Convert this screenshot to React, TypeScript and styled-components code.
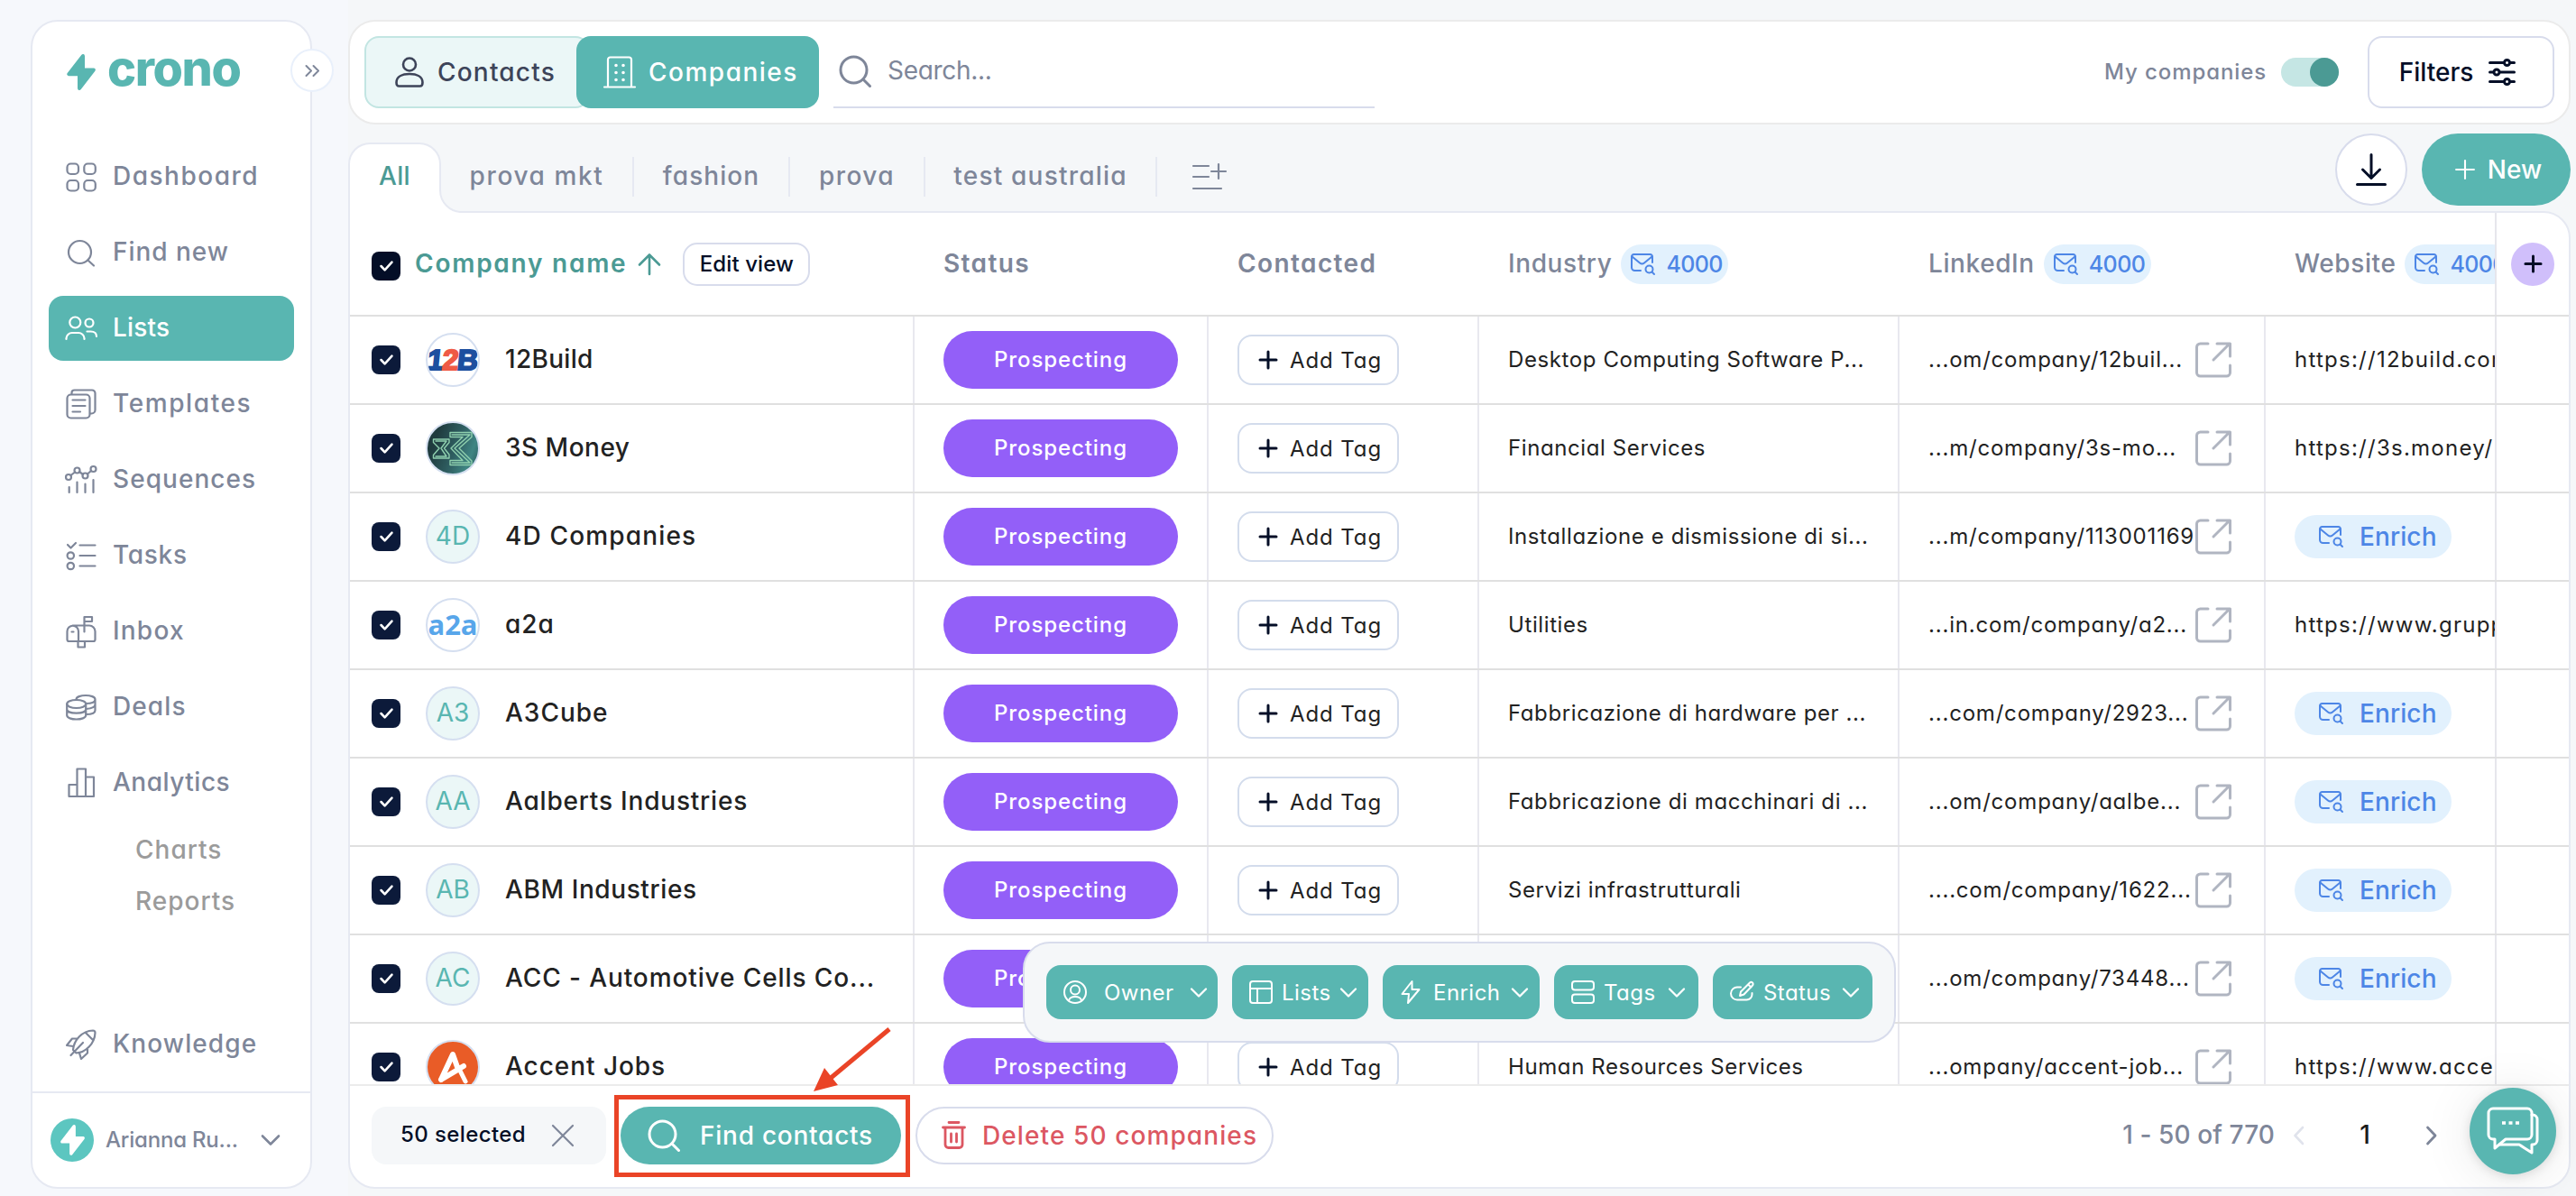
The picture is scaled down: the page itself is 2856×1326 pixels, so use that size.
import React from 'react'
import styled, { createGlobalStyle, css } from 'styled-components'

const teal = '#59b6b1'
const tealDark = '#4b9a94'
const grey = '#7e8699'
const navy = '#040e27'
const line = '#e6e9f2'
const outline = '#d8dcec'
const blue = '#4d86e6'

const GlobalStyle = createGlobalStyle`
*{
    box-sizing:border-box;
}
body{
    margin:0;
    background:#f6f8fc;
    font-family:Inter, "Liberation Sans", sans-serif;
    font-feature-settings:"cv11";
    line-height:1.2;
}
`

const Page = styled.div`
    position:relative;
    display:flex;
    width:2856px;
    height:1326px;
    overflow:hidden;
    white-space:nowrap;
    color:#222;
`

const Svg = styled.svg<{ $s?: number }>`
    display:block;
    flex:none;
    overflow:visible;
    fill:none;
    stroke:currentColor;
    stroke-width:${({ $s }) => $s || 2};
    stroke-linecap:round;
    stroke-linejoin:round;
`

/* ---------- sidebar ---------- */

const Sidebar = styled.aside`
    position:relative;
    display:flex;
    flex-direction:column;
    flex:none;
    width:312px;
    margin:22px 40px 8px 34px;
    border:2px solid ${line};
    border-radius:30px;
    background:#fff;
`

const Logo = styled.div`
    display:flex;
    align-items:center;
    gap:13px;
    height:76px;
    margin:18px 0 0 38px;
    color:${teal};
`

const LogoText = styled.span`
    font-size:54px;
    font-weight:800;
    line-height:60px;
    letter-spacing:-1.4px;
    margin-top:-8px;
`

const Collapse = styled.button`
    position:absolute;
    top:30px;
    right:-26px;
    display:flex;
    align-items:center;
    justify-content:center;
    width:48px;
    height:48px;
    padding:0;
    border:2px solid #e9f0fb;
    border-radius:50%;
    background:#fff;
    color:${grey};
`

const Nav = styled.nav`
    display:flex;
    flex-direction:column;
    gap:12px;
    margin:42px 18px 0;
`

const NavItem = styled.a<{ $active?: boolean; $track: number }>`
    display:flex;
    align-items:center;
    gap:17px;
    height:72px;
    padding-left:18px;
    border-radius:16px;
    font-size:28px;
    font-weight:500;
    letter-spacing:${({ $track }) => $track}px;
    color:${({ $active }) => ($active ? '#fff' : grey)};
    background:${({ $active }) => ($active ? teal : 'transparent')};
`

const SubNav = styled.div`
    display:flex;
    flex-direction:column;
    gap:23px;
    margin:22px 0 0 114px;
    font-size:28px;
    font-weight:500;
    letter-spacing:1px;
    color:#9b9b9b;
`

const Bottom = styled.div`
    margin:auto 18px 16px;
`

const Profile = styled.div`
    display:flex;
    align-items:center;
    height:106px;
    padding:0 34px 0 20px;
    border-top:2px solid ${line};
    font-size:24px;
    font-weight:500;
    letter-spacing:-.2px;
    color:${grey};
`

const ProfileBadge = styled.span`
    display:flex;
    align-items:center;
    justify-content:center;
    width:48px;
    height:48px;
    margin-right:13px;
    border-radius:50%;
    background:#5cc6c0;
    color:#fff;
`

/* ---------- main area ---------- */

const Main = styled.main`
    display:flex;
    flex-direction:column;
    flex:1;
    min-width:0;
    padding:22px 6px 8px 0;
    background:#f5f7f9;
`

const TopBar = styled.header`
    display:flex;
    align-items:center;
    flex:none;
    height:116px;
    padding:0 16px;
    border:2px solid #ebebeb;
    border-radius:30px;
    background:#fff;
`

const Segment = styled.button<{ $active?: boolean }>`
    display:flex;
    align-items:center;
    height:80px;
    border-radius:16px;
    font-family:inherit;
    font-feature-settings:inherit;
    font-size:28px;
    font-weight:500;
    ${({ $active }) =>
        $active
            ? css`
                  width:269px;
                  margin-left:-15px;
                  padding:0 0 0 30px;
                  gap:14px;
                  border:0;
                  letter-spacing:1.5px;
                  background:${teal};
                  color:#fff;
              `
            : css`
                  width:250px;
                  padding:0 0 0 32px;
                  gap:15px;
                  border:2px solid #c2e5e2;
                  letter-spacing:1.2px;
                  background:#ebf7f7;
                  color:#3d4459;
              `}
`

const Search = styled.div`
    display:flex;
    align-items:center;
    gap:18px;
    width:600px;
    height:80px;
    margin-left:16px;
    padding:0 0 0 6px;
    border-bottom:2px solid ${outline};
    font-size:28px;
    letter-spacing:-.3px;
    color:${grey};
`

const ToggleLabel = styled.span`
    margin-left:auto;
    font-size:24px;
    font-weight:500;
    letter-spacing:.9px;
    color:${grey};
`

const Toggle = styled.span`
    display:flex;
    justify-content:flex-end;
    width:64px;
    height:32px;
    margin:0 32px 0 16px;
    border-radius:16px;
    background:#c5e6e4;

    &::after{
        content:'';
        width:32px;
        border-radius:50%;
        background:${tealDark};
    }
`

const FiltersButton = styled.button`
    display:flex;
    align-items:center;
    justify-content:center;
    gap:17px;
    width:207px;
    height:80px;
    padding:0 8px 0 0;
    border:2px solid ${outline};
    border-radius:16px;
    background:#fff;
    font:500 28px Inter, sans-serif;
    color:${navy};
`

const TabsRow = styled.div`
    display:flex;
    flex:none;
    height:96px;
`

const ActiveTab = styled.div`
    position:relative;
    z-index:1;
    width:103px;
    height:78px;
    margin-top:20px;
    padding-top:19px;
    border:2px solid ${line};
    border-bottom:0;
    border-radius:24px 24px 0 0;
    background:#fff;
    text-align:center;
    font-size:28px;
    font-weight:500;
    letter-spacing:.4px;
    color:${tealDark};
`

const TabCurve = styled(Svg)`
    position:absolute;
    left:100%;
    bottom:0;
`

const Tab = styled.div<{ $w: number; $track: number }>`
    display:flex;
    align-items:center;
    justify-content:center;
    width:${({ $w }) => $w}px;
    height:44px;
    margin-top:36px;
    border-right:2px solid ${line};
    font-size:28px;
    font-weight:500;
    letter-spacing:${({ $track }) => $track}px;
    color:${grey};
`

const Actions = styled.div`
    display:flex;
    gap:16px;
    margin:10px 0 0 auto;
`

const RoundButton = styled.button`
    display:flex;
    align-items:center;
    justify-content:center;
    width:80px;
    height:80px;
    padding:0;
    border:2px solid ${outline};
    border-radius:50%;
    background:#fff;
    color:${navy};
`

const NewButton = styled.button`
    display:flex;
    align-items:center;
    justify-content:center;
    gap:14px;
    width:165px;
    height:80px;
    padding:0 0 0 5px;
    border:0;
    border-radius:40px;
    background:${teal};
    font:500 28px Inter, sans-serif;
    color:#fff;
`

/* ---------- table ---------- */

const Table = styled.section`
    display:flex;
    flex-direction:column;
    flex:1;
    min-height:0;
    border:2px solid ${line};
    border-radius:0 30px 30px 30px;
    background:#fff;
    overflow:hidden;
`

const Row = styled.div<{ $head?: boolean }>`
    display:grid;
    grid-template-columns:626px 326px 300px 466px 406px 254px 82px;
    flex:none;
    height:${({ $head }) => ($head ? 115 : 98)}px;
    border-bottom:2px solid #e0e0e0;
`

const Cell = styled.div`
    display:flex;
    align-items:center;
    min-width:0;
    padding-left:32px;
    border-right:2px solid #e8e8ef;
    overflow:hidden;
    font-size:24px;
    letter-spacing:.6px;

    &:first-child{
        padding-left:24px;
    }
    &:nth-child(6){
        border-right:0;
    }
    &:last-child{
        padding-left:0;
        border-right:0;
        border-left:2px solid #e6e6ec;
        justify-content:center;
    }
`

const HeadCell = styled(Cell)<{ $bold?: boolean }>`
    border-right-color:transparent;
    font-size:28px;
    font-weight:${({ $bold }) => ($bold ? 600 : 500)};
    letter-spacing:${({ $bold }) => ($bold ? 1.4 : 0.6)}px;
    color:${grey};
`

const SortLabel = styled.span`
    margin:0 13px 0 16px;
    letter-spacing:1.75px;
    color:${tealDark};
`

const EditView = styled.button`
    width:141px;
    height:48px;
    margin-left:25px;
    padding:0;
    border:2px solid ${outline};
    border-radius:16px;
    background:#fff;
    font:500 24px Inter, sans-serif;
    letter-spacing:.1px;
    color:${navy};
`

const Credit = styled.span`
    display:flex;
    align-items:center;
    flex:none;
    gap:12px;
    width:119px;
    height:44px;
    margin-left:10px;
    padding-left:11px;
    border-radius:22px;
    background:#e2f1fd;
    font-size:25px;
    font-weight:500;
    letter-spacing:-.6px;
    color:${blue};
`

const AddColumn = styled.button`
    display:flex;
    align-items:center;
    justify-content:center;
    width:48px;
    height:48px;
    padding:0;
    border:0;
    border-radius:50%;
    background:#d0bffb;
    color:${navy};
`

const CheckBox = styled.span<{ $head?: boolean }>`
    display:flex;
    align-items:center;
    justify-content:center;
    flex:none;
    width:32px;
    height:32px;
    margin-top:${({ $head }) => ($head ? 5 : 0)}px;
    border-radius:8px;
    background:${({ $head }) => ($head ? navy : '#0c1a3a')};
    color:#fff;
`

const Avatar = styled.span<{ $bg: string }>`
    display:flex;
    align-items:center;
    justify-content:center;
    flex:none;
    width:60px;
    height:60px;
    margin:0 28px;
    border:2px solid #d5dff0;
    border-radius:50%;
    background:${({ $bg }) => $bg};
    overflow:hidden;
    font-size:28px;
    letter-spacing:0;
    color:${teal};
`

const BuildLogo = styled.span`
    font:900 32px "Liberation Sans", sans-serif;
    letter-spacing:-1.2px;
    color:#1d4f9f;
    transform:skewX(-6deg);
    -webkit-text-stroke:2px #1d4f9f;

    b{
        color:#ef5a45;
        -webkit-text-stroke:2px #ef5a45;
    }
`

const A2aLogo = styled.span`
    margin-top:-3px;
    font:700 31px "Open Sans", sans-serif;
    color:#58a6ea;
`

const Name = styled.span<{ $track: number }>`
    font-size:28px;
    font-weight:500;
    letter-spacing:${({ $track }) => $track}px;
`

const StatusPill = styled.span`
    display:flex;
    align-items:center;
    justify-content:center;
    width:260px;
    height:64px;
    border-radius:32px;
    background:#935ff8;
    font-weight:500;
    letter-spacing:.9px;
    color:#fff;
`

const AddTag = styled.button`
    display:flex;
    align-items:center;
    gap:14px;
    width:179px;
    height:56px;
    padding:0 0 0 22px;
    border:2px solid #d3dcec;
    border-radius:16px;
    background:#fff;
    font:400 24px Inter, sans-serif;
    font-feature-settings:inherit;
    letter-spacing:.9px;
    color:#222;

    svg{
        color:${navy};
    }
`

const Url = styled.span`
    width:296px;
    flex:none;
    letter-spacing:.8px;
`

const Site = styled.span`
    letter-spacing:1.25px;
`

const Enrich = styled.button`
    display:flex;
    align-items:center;
    gap:18px;
    width:174px;
    height:48px;
    padding:0 0 0 27px;
    border:0;
    border-radius:24px;
    background:#e2f1fd;
    font:500 28px Inter, sans-serif;
    letter-spacing:.1px;
    color:${blue};
`

const Rows = styled.div`
    flex:1;
    min-height:0;
    overflow:hidden;
`

const Footer = styled.footer`
    display:flex;
    align-items:center;
    flex:none;
    height:114px;
    padding:0 146px 3px 24px;
    border-top:2px solid #ebebeb;
    font-size:28px;
    font-weight:500;
    letter-spacing:.1px;
    color:${grey};
`

const Selected = styled.span`
    display:flex;
    align-items:center;
    justify-content:space-between;
    width:260px;
    height:64px;
    padding:0 36px 0 32px;
    border-radius:16px;
    background:#f5f7f9;
    font-size:24px;
    letter-spacing:.4px;
    color:${navy};

    svg{
        color:${grey};
    }
`

const FooterButton = styled.button<{ $danger?: boolean }>`
    display:flex;
    align-items:center;
    height:64px;
    margin-left:16px;
    border-radius:32px;
    font-family:inherit;
    font-feature-settings:inherit;
    font-size:28px;
    font-weight:500;
    ${({ $danger }) =>
        $danger
            ? css`
                  width:397px;
                  padding:0 0 0 27px;
                  gap:18px;
                  border:2px solid ${outline};
                  background:#fff;
                  letter-spacing:1.1px;
                  color:#dc5762;
              `
            : css`
                  width:311px;
                  padding:0 0 0 30px;
                  gap:22px;
                  border:0;
                  background:${teal};
                  letter-spacing:.75px;
                  color:#fff;
              `}
`

const Pager = styled.div`
    display:flex;
    align-items:center;
    margin-left:auto;

    b{
        width:136px;
        text-align:center;
        font-weight:500;
        color:#1c1c1c;
    }
`

/* ---------- overlays ---------- */

const BulkBar = styled.div`
    position:absolute;
    left:1134px;
    top:1044px;
    display:flex;
    gap:16px;
    width:968px;
    height:112px;
    padding:24px;
    border:2px solid ${outline};
    border-radius:30px;
    background:#f5f7f9;
`

const BulkButton = styled.button<{ $w: number; $gap?: number }>`
    display:flex;
    align-items:center;
    gap:${({ $gap }) => $gap || 10}px;
    width:${({ $w }) => $w}px;
    height:60px;
    padding:0 15px 0 19px;
    border:0;
    border-radius:16px;
    background:${teal};
    font:400 24px Inter, sans-serif;
    font-feature-settings:inherit;
    letter-spacing:.45px;
    color:#fff;

    svg:last-child{
        margin-left:auto;
    }
`

const ChatButton = styled.button`
    position:absolute;
    left:2738px;
    top:1206px;
    display:flex;
    align-items:center;
    justify-content:center;
    width:96px;
    height:96px;
    padding:0;
    border:0;
    border-radius:50%;
    background:${teal};
    box-shadow:0 2px 12px rgba(0,0,0,.12), 0 4px 60px rgba(0,0,0,.09);
    color:#fff;
`

const Callout = styled(Svg)`
    position:absolute;
    left:676px;
    top:1130px;
    color:#ea4427;
`

/* ---------- icons ---------- */

const Bolt = ({ w, h }: { w: number; h: number }) => (
    <Svg width={w} height={h} viewBox="0 0 32 40" $s={2}>
        <path fill="currentColor" d="M17 1.5 1.5 21.5c-.6.9-.2 1.7.8 1.7H13v14.5c0 1.4 1.2 1.7 2 .6l15.6-20.2c.6-.9.2-1.7-.8-1.7H19V2.2c0-1.4-1.2-1.7-2-.7z" />
    </Svg>
)

const SearchIcon = ({ size = 36, s = 2.6 }: { size?: number; s?: number }) => (
    <Svg width={size} height={size} viewBox="0 0 36 36" $s={s}>
        <circle cx="16.5" cy="16.5" r="14.5" />
        <path d="M27 27l7.5 7.5" />
    </Svg>
)

const Plus = ({ size = 20, s = 3 }: { size?: number; s?: number }) => (
    <Svg width={size} height={size} viewBox="0 0 20 20" $s={s}>
        <path d="M10 1v18M1 10h18" />
    </Svg>
)

const Check = () => (
    <Svg width="17" height="12" viewBox="0 0 18 14" $s={3}>
        <path d="M2 7l4.8 5L16 2" />
    </Svg>
)

const Chevron = ({ w = 18 }: { w?: number }) => (
    <Svg width={w} height={w / 2} viewBox="0 0 18 9" $s={2.3}>
        <path d="M1 .5l8 8 8-8" />
    </Svg>
)

const MailSearch = () => (
    <Svg width="27" height="24" viewBox="0 0 27 24">
        <path d="M11 19H4.5A3.5 3.5 0 0 1 1 15.5V3.5A2.5 2.5 0 0 1 3.5 1h18A2.5 2.5 0 0 1 24 3.5V10" />
        <path d="M1.5 3.5L10 10.5a4 4 0 0 0 5 0L23.5 3.5" />
        <circle cx="20.5" cy="17.5" r="4" />
        <path d="M23.5 20.5L26 23" />
    </Svg>
)

const External = () => (
    <Svg width="40" height="40" viewBox="0 0 40 40" $s={3} color="#b0b5c1">
        <path d="M14 2H5.5A4 4 0 0 0 1.5 6v28a4 4 0 0 0 4 4h29a4 4 0 0 0 4-4v-8M24 2h14.500v14M38 2L20 20" />
    </Svg>
)

const navIcons: Record<string, React.ReactNode> = {
    Dashboard: (
        <>
            <rect x="2.5" y="3.5" width="12.5" height="11.5" rx="4" />
            <rect x="21.3" y="3.5" width="12.5" height="11.5" rx="4" />
            <rect x="2.5" y="22" width="12.5" height="11.5" rx="4" />
            <rect x="21.3" y="22" width="12.5" height="11.5" rx="4" />
        </>
    ),
    'Find new': (
        <>
            <circle cx="16.5" cy="17.5" r="12.5" />
            <path d="M25.500 26.500l6.500 6" />
        </>
    ),
    Lists: (
        <>
            <circle cx="11.3" cy="11.5" r="6" />
            <circle cx="27" cy="12" r="4.5" />
            <path d="M1.5 30v-1a6.5 6.5 0 0 1 6.5-6h7a6.5 6.5 0 0 1 6.5 6v1M24.5 21.5h4c4 0 6.5 1.5 6.5 5.5" />
        </>
    ),
    Templates: (
        <>
            <rect x="2.5" y="7.5" width="25" height="26" rx="4" />
            <path d="M7.5 7V5.5a3 3 0 0 1 3-3H30a3.5 3.5 0 0 1 3.5 3.5v18.5a4 4 0 0 1-4 4H28M8.5 13.5h14M8.5 20h14M8.5 26.5h8.5" />
        </>
    ),
    Sequences: (
        <>
            <circle cx="4" cy="15" r="3" />
            <circle cx="13.5" cy="7.5" r="3" />
            <circle cx="22.5" cy="13.5" r="3" />
            <circle cx="31.5" cy="6" r="3" />
            <path d="M6.5 13l4.5-3.5M16 9l4 3M25 11.5l4-3.5M4.7 26v6M13.5 20.5V32M22.5 22.5V32M31.5 18v14" />
        </>
    ),
    Tasks: (
        <>
            <path d="M3 6l3.5 3.5L12 4M16.5 6.5h17M16.5 18h17M16.5 29.5h17" />
            <circle cx="6.3" cy="18" r="3.7" />
            <circle cx="6.3" cy="29.5" r="3.7" />
        </>
    ),
    Inbox: (
        <>
            <path d="M8.5 11.5H27a6.5 6.5 0 0 1 6.5 6.5v9a2 2 0 0 1-2 2h-27a2 2 0 0 1-2-2V18a6.2 6.2 0 0 1 12.5 0v11M21.5 18.5V2H30v5h-8.5M14.5 29v6.5H22V29M7.5 18.5h2" />
        </>
    ),
    Deals: (
        <>
            <ellipse cx="12.7" cy="14.5" rx="10.5" ry="4.5" />
            <path d="M2.2 14.5V27c0 6 21 6 21 0V14.5M2.2 20.5c0 5.5 21 5.5 21 0" />
            <path d="M12.5 9.5c0-6 21-6 21 0 0 3-5 4.5-10.5 4.500M33.5 9.5V21.5c0 3-4 4.5-10 4.500M33.5 15c0 3-4 4.5-10 5" />
        </>
    ),
    Analytics: (
        <>
            <path d="M4.5 20h9v13h-9zM13.5 2.5H23V33h-9.500zM23 11.5h9V33h-9z" />
        </>
    ),
    Knowledge: (
        <>
            <path d="M9 24C10 13 19 3 31 2.5c1.5 0 2.5 1 2.5 2.5C33 17 23 27 12.5 27.500zM23 5l8.5 8.5M13 11.5H8L2 19l7 1M25 22v5.5L18 34l-2-6.500M20 16L6.5 30" />
        </>
    )
}

const NavIcon = ({ name }: { name: string }) => (
    <Svg width="36" height="36" viewBox="0 0 36 36" $s={2.2}>
        {navIcons[name]}
    </Svg>
)

/* ---------- data ---------- */

const navItems = [
    { label: 'Dashboard', track: 1.5 },
    { label: 'Find new', track: 0.95 },
    { label: 'Lists', track: 0.2 },
    { label: 'Templates', track: 1.6 },
    { label: 'Sequences', track: 1.05 },
    { label: 'Tasks', track: 0.7 },
    { label: 'Inbox', track: 1.2 },
    { label: 'Deals', track: 1.1 },
    { label: 'Analytics', track: 0.5 }
]

const tabs = [
    { label: 'prova mkt', width: 214, track: 1.6 },
    { label: 'fashion', width: 173, track: 1.05 },
    { label: 'prova', width: 150, track: 1.4 },
    { label: 'test australia', width: 257, track: 1.2 }
]

const companies = [
    { name: '12Build', track: 0.3, logo: '12b', industry: 'Desktop Computing Software P...', linkedin: '...om/company/12buil...', site: 'https://12build.com' },
    { name: '3S Money', track: 0.5, logo: '3s', industry: 'Financial Services', linkedin: '...m/company/3s-mo...', site: 'https://3s.money/' },
    { name: '4D Companies', track: 1.15, logo: '4D', industry: 'Installazione e dismissione di si...', linkedin: '...m/company/113001169' },
    { name: 'a2a', track: 1, logo: 'a2a', industry: 'Utilities', linkedin: '...in.com/company/a2...', site: 'https://www.gruppo' },
    { name: 'A3Cube', track: 1, logo: 'A3', industry: 'Fabbricazione di hardware per ...', linkedin: '...com/company/2923...' },
    { name: 'Aalberts Industries', track: 0.8, logo: 'AA', industry: 'Fabbricazione di macchinari di ...', linkedin: '...om/company/aalbe...' },
    { name: 'ABM Industries', track: 0.6, logo: 'AB', industry: 'Servizi infrastrutturali', linkedin: '....com/company/1622...' },
    { name: 'ACC - Automotive Cells Co...', track: 0.9, logo: 'AC', industry: '', linkedin: '...om/company/73448...' },
    { name: 'Accent Jobs', track: 0.95, logo: 'accent', industry: 'Human Resources Services', linkedin: '...ompany/accent-job...', site: 'https://www.accent' }
]

const CompanyLogo = ({ logo }: { logo: string }) => {
    if (logo === '12b') {
        return (
            <Avatar $bg="#fff">
                <BuildLogo>
                    1<b>2</b>B
                </BuildLogo>
            </Avatar>
        )
    }
    if (logo === '3s') {
        return (
            <Avatar $bg="linear-gradient(110deg, #1f3b3e 20%, #2f5f62 55%, #3f8583 80%, #28575a)">
                <Svg width="56" height="56" viewBox="0 0 56 56" $s={1.4} color="#8fd0ae">
                    <path d="M25 10.5h24v5L35 28l14 14v4.500H25v-5h14L26 28l13-12.500H25zM27 13h20L30 28l17 16H27" />
                    <path d="M6.500 18H24v3.500L18.500 28l5.500 7v4H6.500v-3.500L13 28l-6.500-6.500zM9 20h12l-6 8 6 9H9" />
                </Svg>
            </Avatar>
        )
    }
    if (logo === 'a2a') {
        return (
            <Avatar $bg="#fff">
                <A2aLogo>a2a</A2aLogo>
            </Avatar>
        )
    }
    if (logo === 'accent') {
        return (
            <Avatar $bg="#e95c27">
                <Svg width="56" height="56" viewBox="0 0 56 56" $s={6} color="#fff">
                    <path d="M15 42L28 14l5 14M15 42L40 27" />
                    <path d="M35 30l7 14" strokeWidth="5" />
                </Svg>
            </Avatar>
        )
    }
    return <Avatar $bg="#ebf7f7">{logo}</Avatar>
}

export default function App() {
    return (
        <Page>
            <GlobalStyle />
            <Sidebar>
                <Logo>
                    <Bolt w={32} h={40} />
                    <LogoText>crono</LogoText>
                </Logo>
                <Collapse>
                    <Svg width="16" height="13" viewBox="0 0 16 13">
                        <path d="M1.500 1l5.500 5.500L1.500 12M9.500 1l5.500 5.500L9.500 12" />
                    </Svg>
                </Collapse>
                <Nav>
                    {navItems.map(item => (
                        <NavItem key={item.label} $active={item.label === 'Lists'} $track={item.track}>
                            <NavIcon name={item.label} />
                            {item.label}
                        </NavItem>
                    ))}
                </Nav>
                <SubNav>
                    <span>Charts</span>
                    <span>Reports</span>
                </SubNav>
                <Bottom>
                    <NavItem $track={1.1}>
                        <NavIcon name="Knowledge" />
                        Knowledge
                    </NavItem>
                </Bottom>
                <Profile>
                    <ProfileBadge>
                        <Bolt w={27} h={34} />
                    </ProfileBadge>
                    Arianna Ru...
                    <Svg width="20" height="12" viewBox="0 0 20 12" $s={2.6} style={{ marginLeft: 'auto' }}>
                        <path d="M1 1.500l9 9 9-9" />
                    </Svg>
                </Profile>
            </Sidebar>

            <Main>
                <TopBar>
                    <Segment>
                        <Svg width="32" height="34" viewBox="0 0 32 34" $s={2.6}>
                            <ellipse cx="16" cy="8.5" rx="7" ry="7" />
                            <path d="M1.500 28.500C1.500 22 8 19 16 19s14.500 3 14.500 9.500c0 2.500-1 4-3 4h-23c-2 0-3-1.500-3-4z" />
                        </Svg>
                        Contacts
                    </Segment>
                    <Segment $active>
                        <Svg width="36" height="36" viewBox="0 0 36 36" $s={2.2}>
                            <path d="M5 33V4a2.500 2.500 0 0 1 2.500-2.500h21A2.500 2.500 0 0 1 31 4v29M1 34.500h34" />
                            <path strokeWidth="3.6" d="M14 10.500h.01M22 10.500h.01M14 18.500h.01M22 18.500h.01M14 26.500h.01M22 26.500h.01" />
                        </Svg>
                        Companies
                    </Segment>
                    <Search>
                        <SearchIcon s={3} />
                        Search...
                    </Search>
                    <ToggleLabel>My companies</ToggleLabel>
                    <Toggle />
                    <FiltersButton>
                        Filters
                        <Svg width="30" height="30" viewBox="0 0 30 30" $s={3}>
                            <path d="M1.500 4.500h15M24.500 4.500h4M1.500 15H5M13 15h15.500M1.500 25.500h15M24.500 25.500h4" />
                            <circle cx="20.5" cy="4.5" r="3" />
                            <circle cx="9" cy="15" r="3" />
                            <circle cx="20.5" cy="25.5" r="3" />
                        </Svg>
                    </FiltersButton>
                </TopBar>

                <TabsRow>
                    <ActiveTab>
                        All
                        <TabCurve width="26" height="26" viewBox="0 0 26 26">
                            <path d="M0 0H1V1A24 24 0 0 0 25 25V26H-1V0z" fill="#fff" stroke="none" />
                            <path d="M1 0V1A24 24 0 0 0 25 25H26" stroke={line} strokeLinecap="butt" />
                        </TabCurve>
                    </ActiveTab>
                    {tabs.map(tab => (
                        <Tab key={tab.label} $w={tab.width} $track={tab.track}>
                            {tab.label}
                        </Tab>
                    ))}
                    <Svg width="38" height="30" viewBox="0 0 38 30" $s={2.2} color={grey} style={{ margin: '43px 0 0 39px' }}>
                        <path d="M1 3h17M1 15h17M1 28h31M21 9h16M29 1v16" />
                    </Svg>
                    <Actions>
                        <RoundButton>
                            <Svg width="34" height="36" viewBox="0 0 34 36" $s={3}>
                                <path d="M17 1.500v26M7.500 18L17 27.500 26.500 18M1.500 34.500h31" />
                            </Svg>
                        </RoundButton>
                        <NewButton>
                            <Plus size={22} s={1.9} />
                            New
                        </NewButton>
                    </Actions>
                </TabsRow>

                <Table>
                    <Row $head>
                        <HeadCell $bold>
                            <CheckBox $head>
                                <Check />
                            </CheckBox>
                            <SortLabel>Company name</SortLabel>
                            <Svg width="24" height="24" viewBox="0 0 24 24" $s={2.6} color={tealDark}>
                                <path d="M12 23V1.500M1 12.500l11-11 11 11" />
                            </Svg>
                            <EditView>Edit view</EditView>
                        </HeadCell>
                        <HeadCell $bold>Status</HeadCell>
                        <HeadCell $bold>Contacted</HeadCell>
                        {['Industry', 'LinkedIn', 'Website'].map(label => (
                            <HeadCell key={label}>
                                {label}
                                <Credit>
                                    <MailSearch />
                                    4000
                                </Credit>
                            </HeadCell>
                        ))}
                        <HeadCell>
                            <AddColumn>
                                <Plus size={19} s={3.2} />
                            </AddColumn>
                        </HeadCell>
                    </Row>
                    <Rows>
                        {companies.map(company => (
                            <Row key={company.name}>
                                <Cell>
                                    <CheckBox>
                                        <Check />
                                    </CheckBox>
                                    <CompanyLogo logo={company.logo} />
                                    <Name $track={company.track}>{company.name}</Name>
                                </Cell>
                                <Cell>
                                    <StatusPill>Prospecting</StatusPill>
                                </Cell>
                                <Cell>
                                    <AddTag>
                                        <Plus />
                                        Add Tag
                                    </AddTag>
                                </Cell>
                                <Cell>{company.industry}</Cell>
                                <Cell>
                                    <Url>{company.linkedin}</Url>
                                    <External />
                                </Cell>
                                <Cell>
                                    {company.site ? (
                                        <Site>{company.site}</Site>
                                    ) : (
                                        <Enrich>
                                            <MailSearch />
                                            Enrich
                                        </Enrich>
                                    )}
                                </Cell>
                                <Cell />
                            </Row>
                        ))}
                    </Rows>
                    <Footer>
                        <Selected>
                            50 selected
                            <Svg width="24" height="22" viewBox="0 0 24 22" $s={2.2}>
                                <path d="M1 0l22 22M23 0L1 22" />
                            </Svg>
                        </Selected>
                        <FooterButton>
                            <SearchIcon s={3} />
                            Find contacts
                        </FooterButton>
                        <FooterButton $danger>
                            <Svg width="27" height="31" viewBox="0 0 27 31" $s={2.8}>
                                <path d="M8 1.500h11M1.500 7h24M4 7v19a3.500 3.500 0 0 0 3.500 3.500h12A3.500 3.500 0 0 0 23 26V7M10.500 14v9M16.500 14v9" />
                            </Svg>
                            Delete 50 companies
                        </FooterButton>
                        <Pager>
                            1 - 50 of 770
                            <Svg width="11" height="20" viewBox="0 0 11 20" $s={2.6} color="#e0e3ec" style={{ marginLeft: 21 }}>
                                <path d="M10 1L1.500 10l8.500 9" />
                            </Svg>
                            <b>1</b>
                            <Svg width="12" height="20" viewBox="0 0 11 20" $s={2.8}>
                                <path d="M1 1l8.500 9L1 19" />
                            </Svg>
                        </Pager>
                    </Footer>
                </Table>
            </Main>

            <BulkBar>
                <BulkButton $w={190} $gap={19}>
                    <Svg width="26" height="26" viewBox="0 0 26 26">
                        <circle cx="13" cy="13" r="12" />
                        <circle cx="13" cy="10.5" r="5" />
                        <path d="M6 22c1-3 4-4 7-4s6 1 7 4" />
                    </Svg>
                    Owner
                    <Chevron />
                </BulkButton>
                <BulkButton $w={151}>
                    <Svg width="26" height="26" viewBox="0 0 26 26">
                        <rect x="1" y="1" width="24" height="24" rx="3" />
                        <path d="M1 9h24M9 9v16" />
                    </Svg>
                    Lists
                    <Chevron />
                </BulkButton>
                <BulkButton $w={174} $gap={13}>
                    <Svg width="24" height="26" viewBox="0 0 24 26">
                        <path d="M13.500 1L2.500 15h7.500l-1 10 12.500-15h-8z" />
                    </Svg>
                    Enrich
                    <Chevron />
                </BulkButton>
                <BulkButton $w={160}>
                    <Svg width="26" height="26" viewBox="0 0 26 26">
                        <rect x="1" y="1" width="24" height="9.5" rx="3" />
                        <rect x="1" y="15.5" width="24" height="9.5" rx="3" />
                    </Svg>
                    Tags
                    <Chevron />
                </BulkButton>
                <BulkButton $w={177}>
                    <Svg width="27" height="26" viewBox="0 0 27 26">
                        <path d="M12 7.500H8.500a7 7 0 0 0-7.500 7 7 7 0 0 0 7.500 7h10a6 6 0 0 0 6-6v-1.500M11 17l1-4.500L22 2.500a2 2 0 0 1 3 3L15.500 15.500zM20 4.500l3.500 3" />
                    </Svg>
                    Status
                    <Chevron />
                </BulkButton>
            </BulkBar>

            <Callout width="340" height="180" viewBox="676 1130 340 180" $s={5}>
                <path d="M683.500 1216.500h323v86h-323z" strokeLinejoin="miter" />
                <path d="M986 1141L920 1196" strokeLinecap="butt" />
                <path d="M902 1210l12-26 15 19z" fill="currentColor" stroke="none" />
            </Callout>

            <ChatButton>
                <Svg width="58" height="54" viewBox="0 0 58 54" $s={3}>
                    <path d="M7 2h38a5 5 0 0 1 5 5v24a5 5 0 0 1-5 5H21L9 46V36H7a5 5 0 0 1-5-5V7a5 5 0 0 1 5-5z" />
                    <path d="M50 9h1a5 5 0 0 1 5 5v23a5 5 0 0 1-5 5h-1v9L36 42H14" />
                    <path strokeWidth="3.6" strokeLinecap="butt" d="M17 18h4M24.500 18h4M32 18h4" />
                </Svg>
            </ChatButton>
        </Page>
    )
}
